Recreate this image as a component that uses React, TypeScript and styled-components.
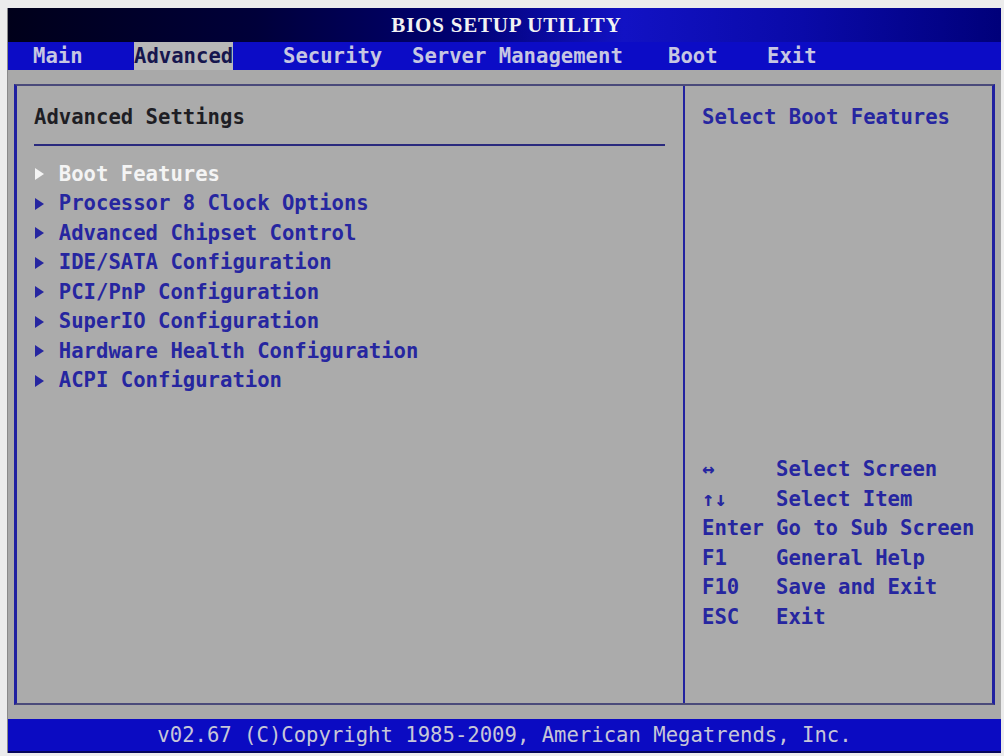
import styled, { createGlobalStyle } from 'styled-components'

const GlobalStyle = createGlobalStyle`
  html, body {
    margin: 0;
    padding: 0;
    background: #ececec;
  }
  body {
    font-family: 'DejaVu Sans Mono', 'Liberation Mono', monospace;
  }
`

const tabs = [
  { label: 'Main', width: 101 },
  { label: 'Advanced', width: 149, active: true },
  { label: 'Security', width: 129 },
  { label: 'Server Management', width: 256 },
  { label: 'Boot', width: 99 },
  { label: 'Exit', width: 120 },
]

const items = [
  'Boot Features',
  'Processor 8 Clock Options',
  'Advanced Chipset Control',
  'IDE/SATA Configuration',
  'PCI/PnP Configuration',
  'SuperIO Configuration',
  'Hardware Health Configuration',
  'ACPI Configuration',
]

const keys = [
  { key: '↔', text: 'Select Screen' },
  { key: '↑↓', text: 'Select Item' },
  { key: 'Enter', text: 'Go to Sub Screen' },
  { key: 'F1', text: 'General Help' },
  { key: 'F10', text: 'Save and Exit' },
  { key: 'ESC', text: 'Exit' },
]

function App() {
  return (
    <>
      <GlobalStyle />
      <Screen>
        <TitleBar>BIOS SETUP UTILITY</TitleBar>
        <MenuBar>
          {tabs.map((t) => (
            <Tab key={t.label} $width={t.width}>
              <TabLabel $active={!!t.active}>{t.label}</TabLabel>
            </Tab>
          ))}
        </MenuBar>
        <Body>
          <Panel>
            <Main>
              <Heading>Advanced Settings</Heading>
              <Rule />
              <ItemList>
                {items.map((label, i) => (
                  <Item key={label} $selected={i === 0}>
                    <Arrow $selected={i === 0} />
                    {label}
                  </Item>
                ))}
              </ItemList>
            </Main>
            <Side>
              <HelpTitle>Select Boot Features</HelpTitle>
              <KeyList>
                {keys.map((k) => (
                  <KeyRow key={k.key}>
                    <KeyName>{k.key}</KeyName>
                    <span>{k.text}</span>
                  </KeyRow>
                ))}
              </KeyList>
            </Side>
          </Panel>
        </Body>
        <Footer>v02.67 (C)Copyright 1985-2009, American Megatrends, Inc.</Footer>
      </Screen>
    </>
  )
}

const Screen = styled.div`
  margin: 8px 3px 0 7px;
  height: 745px;
  display: flex;
  flex-direction: column;
  border-left: 1px solid #8a8a8a;
  background: #a9a9a9;
`
const TitleBar = styled.div`
  height: 34px;
  display: flex;
  align-items: center;
  justify-content: center;
  background: linear-gradient(
    90deg,
    #00001a 0%,
    #00003a 25%,
    #000070 45%,
    #1212c4 62%,
    #0a0aa8 80%,
    #00007a 100%
  );
  color: #f2f2f2;
  font-family: 'Liberation Serif', serif;
  font-weight: 700;
  font-size: 21px;
  letter-spacing: 0.8px;
  padding-left: 4px;
`
const MenuBar = styled.div`
  height: 28px;
  display: flex;
  padding-left: 25px;
  background: #0c0cc6;
  font-size: 20.6px;
  font-weight: 700;
`
const Tab = styled.div<{ $width: number }>`
  width: ${({ $width }) => $width}px;
  display: flex;
`
const TabLabel = styled.div<{ $active: boolean }>`
  display: flex;
  align-items: center;
  color: ${({ $active }) => ($active ? '#16164e' : '#c6c6e2')};
  background: ${({ $active }) => ($active ? '#b8b8b8' : 'transparent')};
  white-space: pre;
`
const Body = styled.div`
  flex: 1;
  padding: 14px 6px 14px 6px;
  display: flex;
`
const Panel = styled.div`
  flex: 1;
  display: flex;
  border: 2px solid #4a4a7a;
  border-left: 3px solid #2020a0;
  border-right: 3px solid #2020a0;
  background: #ababab;
  font-size: 20.6px;
  font-weight: 700;
  line-height: 29.5px;
`
const Main = styled.div`
  width: 668px;
  padding: 17px 18px 0 17px;
  box-sizing: border-box;
  border-right: 2px solid #2222a0;
`
const Heading = styled.div`
  color: #1e1e24;
`
const Rule = styled.div`
  height: 2px;
  margin: 11px 0 14px;
  background: #2a2a7e;
`
const ItemList = styled.div`
  display: flex;
  flex-direction: column;
`
const Item = styled.div<{ $selected: boolean }>`
  display: flex;
  align-items: center;
  white-space: pre;
  color: ${({ $selected }) => ($selected ? '#f4f4f4' : '#2626a0')};
`
const Arrow = styled.span<{ $selected: boolean }>`
  width: 24.8px;
  flex: none;
  display: flex;
  align-items: center;
  &::before {
    content: '';
    margin-left: 1px;
    border-style: solid;
    border-width: 6px 0 6px 9px;
    border-color: transparent transparent transparent
      ${({ $selected }) => ($selected ? '#f4f4f4' : '#2626a0')};
  }
`
const Side = styled.div`
  flex: 1;
  padding: 17px 10px 71px 17px;
  display: flex;
  flex-direction: column;
  justify-content: space-between;
  color: #2626a0;
`
const HelpTitle = styled.div``
const KeyList = styled.div`
  display: flex;
  flex-direction: column;
`
const KeyRow = styled.div`
  display: flex;
  white-space: pre;
`
const KeyName = styled.span`
  width: 74px;
  flex: none;
`
const Footer = styled.div`
  height: 34px;
  display: flex;
  align-items: center;
  justify-content: center;
  background: #0b0bc2;
  border-bottom: 2px solid #05055a;
  box-sizing: border-box;
  color: #c6c6d8;
  font-size: 20.6px;
  white-space: pre;
`

export default App
